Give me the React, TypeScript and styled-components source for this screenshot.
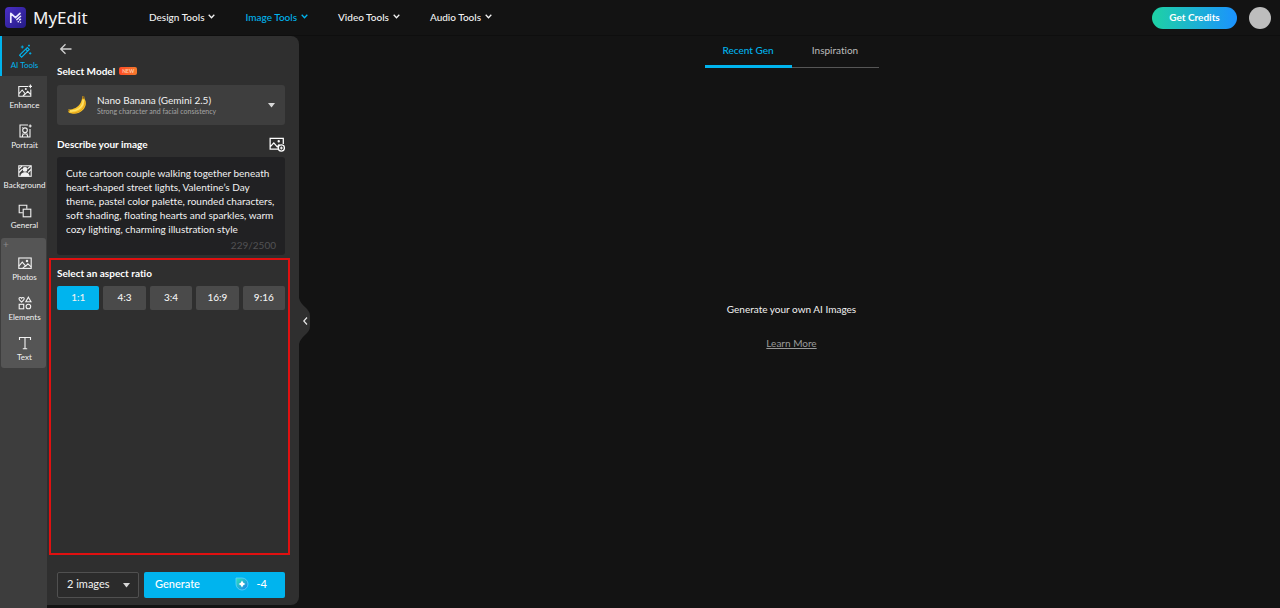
import React, { useState } from "react";
import styled, { createGlobalStyle, css } from "styled-components";

const accent = "#00b4ee";

const GlobalStyle = createGlobalStyle`
  *, *::before, *::after { box-sizing: border-box; }
  body {
    margin: 0;
    background: #131313;
    color: #f2f2f2;
    font-family: Lato, "Liberation Sans", sans-serif;
    font-size: 10px;
    line-height: 14px;
    font-variant-ligatures: none;
  }
  button, select, textarea, input { font: inherit; color: inherit; font-variant-ligatures: none; }
  svg { display: block; }
`;

const Page = styled.div`
  min-height: 100vh;
  display: flex;
  flex-direction: column;
`;

const Header = styled.header`
  height: 36px;
  flex: none;
  display: flex;
  align-items: center;
  padding: 0 9px 0 5px;
  border-bottom: 1px solid #0e0e0e;
`;

const Brand = styled.a`
  display: flex;
  align-items: center;
  gap: 7px;
  width: 144px;
  color: #f4f4f4;
  text-decoration: none;
  font: 400 17px/22px "Noto Sans", sans-serif;
`;

const Nav = styled.nav`
  display: flex;
  flex: 1;
  gap: 30px;
`;

const NavButton = styled.button<{ $active?: boolean }>`
  display: flex;
  align-items: center;
  gap: 4px;
  padding: 0 0 2px;
  border: 0;
  background: none;
  font-weight: 500;
  white-space: nowrap;
  color: ${(p) => (p.$active ? accent : "#f2f2f2")};
`;

const CreditsButton = styled.button`
  height: 22px;
  width: 85px;
  margin-right: 12px;
  padding: 0 0 2px;
  border: 0;
  border-radius: 11px;
  background: linear-gradient(90deg, #1ed2a4, #1b92ff);
  color: #fff;
  font-weight: 700;
`;

const Avatar = styled.button`
  width: 22px;
  height: 22px;
  padding: 0;
  border: 0;
  border-radius: 50%;
  background: #bdbdbd;
`;

const Body = styled.div`
  flex: 1;
  display: flex;
`;

const Rail = styled.nav`
  width: 47px;
  flex: none;
  background: #3d3d3d;
`;

const RailItem = styled.button<{ $active?: boolean }>`
  display: flex;
  flex-direction: column;
  align-items: center;
  gap: 2px;
  width: 100%;
  height: 40px;
  padding: 8px 0 0 2px;
  border: 0;
  background: none;
  font-size: 8px;
  line-height: 10px;
  ${(p) =>
    p.$active &&
    css`
      color: ${accent};
      background: #2f2f2f;
      box-shadow: inset 2px 0 0 ${accent};
    `}
`;

const RailGroup = styled.div`
  position: relative;
  margin: 2px 1px 0;
  padding-top: 10px;
  border-radius: 3px;
  background: #555;
`;

const GroupMark = styled.span`
  position: absolute;
  top: 1px;
  left: 2px;
  color: #8a8a8a;
  font-size: 10px;
  line-height: 10px;
`;

const Panel = styled.aside`
  position: relative;
  width: 252px;
  flex: none;
  display: flex;
  flex-direction: column;
  margin-bottom: 3px;
  padding: 6px 14px 7px 10px;
  border-radius: 0 8px 8px 0;
  background: #2f2f2f;
`;

const BackButton = styled.button`
  align-self: flex-start;
  padding: 0 1px;
  border: 0;
  background: none;
  color: #d0d0d0;
`;

const Heading = styled.div`
  display: flex;
  align-items: center;
  gap: 4px;
  height: 14px;
  font-weight: 700;
  color: #fff;
`;

const ModelHeading = styled(Heading)`
  margin: 8px 0 7px;
`;

const PromptHeading = styled(Heading)`
  justify-content: space-between;
  margin: 12px 0 6px;
`;

const Badge = styled.span`
  padding: 0 3px;
  border-radius: 2px;
  background: linear-gradient(90deg, #ff4a26, #f47a2c);
  color: #ffc9a8;
  font-size: 5px;
  line-height: 8px;
`;

const ModelSelect = styled.button`
  display: flex;
  align-items: center;
  gap: 10px;
  height: 40px;
  padding: 0 10px;
  border: 0;
  border-radius: 3px;
  background: #3e3e3e;
  text-align: left;
`;

const ModelText = styled.span`
  flex: 1;
  display: flex;
  flex-direction: column;
`;

const ModelName = styled.span`
  line-height: 12px;
`;

const ModelNote = styled.span`
  color: #a4a4a4;
  font-size: 7px;
  line-height: 10px;
`;

const IconButton = styled.button`
  padding: 0;
  border: 0;
  background: none;
`;

const PromptBox = styled.div`
  height: 98px;
  padding: 9px 9px 3px;
  border-radius: 3px;
  background: #212123;
`;

const Prompt = styled.textarea`
  display: block;
  width: 100%;
  height: 72px;
  padding: 0;
  border: 0;
  outline: 0;
  resize: none;
  overflow: hidden;
  background: none;
`;

const Counter = styled.div`
  text-align: right;
  color: #525254;
`;

const RatioSection = styled.fieldset`
  flex: 1;
  margin: 3px -5px 0 -8px;
  padding: 6px 3px 0 6px;
  border: 2px solid #e01010;
  min-width: 0;
`;

const RatioTitle = styled(Heading)`
  margin-bottom: 6px;
`;

const RatioRow = styled.div`
  display: grid;
  grid-template-columns: repeat(5, 1fr);
  gap: 4px;
`;

const Ratio = styled.label`
  display: flex;
  align-items: center;
  justify-content: center;
  height: 24px;
  padding-bottom: 2px;
  border-radius: 2px;
  background: #4a4a4a;
  font-weight: 500;
  cursor: pointer;
  &:has(input:checked) { background: ${accent}; }
  input {
    position: absolute;
    opacity: 0;
    pointer-events: none;
  }
`;

const Actions = styled.div`
  display: flex;
  gap: 5px;
  margin-top: 17px;
  font-size: 11px;
`;

const CountField = styled.div`
  display: grid;
  align-items: center;
  width: 82px;
  > * { grid-area: 1 / 1; }
  > svg {
    justify-self: end;
    margin-right: 9px;
    pointer-events: none;
  }
`;

const CountSelect = styled.select`
  appearance: none;
  height: 26px;
  padding: 0 9px 2px;
  border: 1px solid #505050;
  border-radius: 2px;
  background: #2b2b2b;
`;

const GenerateButton = styled.button`
  flex: 1;
  display: flex;
  align-items: center;
  height: 26px;
  padding: 0 18px 2px 11px;
  border: 0;
  border-radius: 2px;
  background: ${accent};
  color: #fff;
  font-weight: 500;
`;

const Cost = styled.span`
  display: flex;
  align-items: center;
  gap: 8px;
  margin-left: auto;
`;

const CollapseButton = styled.button`
  position: absolute;
  top: 262px;
  left: 100%;
  padding: 0;
  border: 0;
  background: none;
`;

const Results = styled.main`
  flex: 1;
  display: flex;
  flex-direction: column;
  align-items: center;
  padding-left: 4px;
`;

const Tabs = styled.div`
  display: flex;
  width: 174px;
`;

const Tab = styled.button<{ $active?: boolean }>`
  flex: 1;
  height: 32px;
  padding: 0 0 5px;
  border: 0;
  background: none;
  color: ${(p) => (p.$active ? accent : "#bcbcbc")};
  font-weight: ${(p) => (p.$active ? 500 : 400)};
  box-shadow: inset 0 ${(p) => (p.$active ? "-3px" : "-1px")} 0 ${(p) => (p.$active ? accent : "#565656")};
`;

const Empty = styled.div`
  flex: 1;
  display: flex;
  flex-direction: column;
  align-items: center;
  justify-content: center;
  gap: 20px;
  padding-bottom: 24px;
  p { margin: 0; }
  a { color: #9a9a9a; }
`;

const Icon = ({ size = 14, children }: { size?: number; children: React.ReactNode }) => (
  <svg width={size} height={size} viewBox="0 0 14 14" fill="none" stroke="currentColor" strokeWidth="1.1" aria-hidden="true">
    {children}
  </svg>
);

const Chevron = () => (
  <svg width="7" height="5" viewBox="0 0 7 5" fill="none" stroke="currentColor" strokeWidth="1.3" aria-hidden="true">
    <path d="M.7.8 3.5 3.7 6.3.8" />
  </svg>
);

const Caret = () => (
  <svg width="7" height="5" viewBox="0 0 7 5" fill="#d8d8d8" aria-hidden="true">
    <path d="M0 0h7L3.5 4.6z" />
  </svg>
);

const Logo = () => (
  <svg width="21" height="22" viewBox="0 0 21 22" aria-hidden="true">
    <defs>
      <linearGradient id="logo" x1="0" y1="0" x2="1" y2="1">
        <stop offset="0" stopColor="#4a2fc4" />
        <stop offset="1" stopColor="#241b86" />
      </linearGradient>
    </defs>
    <rect width="21" height="21" rx="4" fill="url(#logo)" />
    <g fill="none" stroke="#ece9ff" strokeWidth="1.7" strokeLinecap="round" strokeLinejoin="round">
      <path d="M5.800 15.200V6.300l4.700 4.300L15 6.300" />
      <path d="M11.800 12.600 15.600 9.200M15.500 12.200l-.8.700M13.200 14.700l.1-.1M15.500 15.200v.1" strokeWidth="1.500" />
    </g>
  </svg>
);

const Banana = () => (
  <svg width="20" height="20" viewBox="0 0 20 20" aria-hidden="true">
    <path d="M15.300 1.300 17 1l.6 3c2 3.200 1.700 7.200-1.200 10.400-3 3.700-8.500 4.900-12.800 3.900-2.500-.5-3.300-2.100-2.300-3.800 5 .2 9.500-2.200 12.100-6.300 1-1.600 1.300-3.200 1.600-4.700z" fill="#f8c52b" />
    <path d="M16 4.800c.8 3.400-.9 6.600-4 8.800-3 2-5.800 2.700-9.200 2.300" fill="none" stroke="#ffe36a" strokeWidth="1.500" />
    <path d="M17.900 6.500c.5 6-4.900 11.500-12.900 11.700" fill="none" stroke="#dc9716" strokeWidth=".8" />
    <path d="M15.300 1.300 17 1l.4 2.400-1.900.6z" fill="#86621d" />
    <path d="m1.500 14.800 1 .2-.4 1.900c-1-.5-1.300-1.300-.6-2.100z" fill="#704e16" />
  </svg>
);

const Coin = () => (
  <svg width="14" height="14" viewBox="0 0 14 14" aria-hidden="true">
    <defs>
      <linearGradient id="coin" x1="0" y1="0" x2="1" y2="1">
        <stop offset="0" stopColor="#31e2b6" />
        <stop offset="1" stopColor="#1680ee" />
      </linearGradient>
    </defs>
    <path d="M1 1h6a6 6 0 1 1-6 6z" fill="url(#coin)" stroke="#5fd0ff" strokeWidth=".8" />
    <path d="M7 3.600 8.300 5.700 10.400 7 8.300 8.300 7 10.400 5.700 8.300 3.600 7l2.100-1.300z" fill="#fff" />
  </svg>
);

const icons = {
  wand: (
    <>
      <path d="m1.600 11.200 7.700-7.700 2 2-7.700 7.700zM7.600 5.200l2 2" />
      <path d="M4.300 1.500v3M2.800 3h3M11 .6v2M10 1.600h2M12.200 8.200v2.400M11 9.400h2.400" strokeWidth=".9" />
    </>
  ),
  enhance: (
    <>
      <path d="M10 2.500H.8v9.700h12V5.500M.8 10l3.400-4 3.200 4 2.300-2.600 3.100 3.300M5 12l2.400-2.500" />
      <path d="M12.400.6v3.600M10.600 2.400h3.600" />
      <circle cx="7.800" cy="5" r=".5" />
    </>
  ),
  portrait: (
    <>
      <path d="M10 1H2v12h10V5M4.300 12.800c0-4 5.400-4 5.400 0M4 3.500h.6M4 9.600h.4M9.600 9.600h.4" />
      <circle cx="7" cy="6.200" r="2.300" />
      <path d="M12.200.5v3M10.700 2h3" />
    </>
  ),
  background: (
    <>
      <rect x=".8" y="1.800" width="12.400" height="10.500" />
      <path d="m1 5 3-3M1 8.500l3.500-3.500M9.500 5 12.800 2M10 8.500l3-3" />
      <circle cx="7" cy="5.400" r="1.800" fill="currentColor" />
      <path d="M3 12c.5-4.300 7.500-4.300 8 0z" fill="currentColor" />
    </>
  ),
  general: (
    <>
      <path d="M4.800 8.800H1.200V1.200h7.600v3.600" />
      <rect x="5.200" y="5.200" width="7.600" height="7.600" />
    </>
  ),
  photos: (
    <>
      <rect x=".8" y="2" width="12.400" height="10.400" />
      <path d="m.8 10.200 3.500-4 3.400 4 2.200-2.400 3.300 3M4.800 12.200l2.900-2.600" />
      <circle cx="9" cy="5" r=".7" />
    </>
  ),
  elements: (
    <>
      <path d="M3.600 6C2.200 4.800 1 4 1 2.800 1 1.300 3 1 3.600 2.300 4.200 1 6.200 1.300 6.200 2.800 6.200 4 5 4.800 3.600 6zM10.400 1.200 13 5.700H7.800z" />
      <rect x="1.200" y="8.300" width="4.500" height="4.500" />
      <circle cx="10.400" cy="10.500" r="2.300" />
    </>
  ),
  text: <path d="M1.500 4V1.500h11V4M7 1.500v11.300M4.800 12.800h4.400" />,
};

const tools: { id: keyof typeof icons; label: string }[] = [
  { id: "wand", label: "AI Tools" },
  { id: "enhance", label: "Enhance" },
  { id: "portrait", label: "Portrait" },
  { id: "background", label: "Background" },
  { id: "general", label: "General" },
];

const assets: { id: keyof typeof icons; label: string }[] = [
  { id: "photos", label: "Photos" },
  { id: "elements", label: "Elements" },
  { id: "text", label: "Text" },
];

const menus = ["Design Tools", "Image Tools", "Video Tools", "Audio Tools"];
const ratios = ["1:1", "4:3", "3:4", "16:9", "9:16"];

const initialPrompt =
  "Cute cartoon couple walking together beneath heart-shaped street lights, Valentine’s Day theme, pastel color palette, rounded characters, soft shading, floating hearts and sparkles, warm cozy lighting, charming illustration style";

export default function App() {
  const [prompt, setPrompt] = useState(initialPrompt);
  const [ratio, setRatio] = useState("1:1");
  const [tool, setTool] = useState("wand");

  return (
    <Page>
      <GlobalStyle />
      <Header>
        <Brand href="#">
          <Logo />
          MyEdit
        </Brand>
        <Nav>
          {menus.map((m) => (
            <NavButton key={m} $active={m === "Image Tools"}>
              {m}
              <Chevron />
            </NavButton>
          ))}
        </Nav>
        <CreditsButton>Get Credits</CreditsButton>
        <Avatar aria-label="Account" />
      </Header>
      <Body>
        <Rail>
          {tools.map((t) => (
            <RailItem key={t.id} $active={t.id === tool} onClick={() => setTool(t.id)}>
              <Icon>{icons[t.id]}</Icon>
              {t.label}
            </RailItem>
          ))}
          <RailGroup>
            <GroupMark aria-hidden="true">+</GroupMark>
            {assets.map((t) => (
              <RailItem key={t.id}>
                <Icon>{icons[t.id]}</Icon>
                {t.label}
              </RailItem>
            ))}
          </RailGroup>
        </Rail>
        <Panel>
          <BackButton aria-label="Back">
            <Icon>
              <path d="M13.500 7H3M7.500 2.200 2.700 7l4.800 4.800" strokeWidth="1.300" />
            </Icon>
          </BackButton>
          <ModelHeading>
            Select Model <Badge>NEW</Badge>
          </ModelHeading>
          <ModelSelect aria-haspopup="listbox">
            <Banana />
            <ModelText>
              <ModelName>Nano Banana (Gemini 2.5)</ModelName>
              <ModelNote>Strong character and facial consistency</ModelNote>
            </ModelText>
            <Caret />
          </ModelSelect>
          <PromptHeading>
            <label htmlFor="prompt">Describe your image</label>
            <IconButton aria-label="Add reference image">
              <Icon size={16}>
                <path d="M8 11.500H1V2h11.500v5M1 9.500 4.200 6l3 3.500L9 7.300" />
                <circle cx="8.500" cy="4.600" r=".5" />
                <circle cx="10.800" cy="10.500" r="2.700" />
                <path d="M10.800 9.200v2.600M9.500 10.500h2.600" strokeWidth=".9" />
              </Icon>
            </IconButton>
          </PromptHeading>
          <PromptBox>
            <Prompt id="prompt" spellCheck={false} value={prompt} onChange={(e) => setPrompt(e.target.value)} />
            <Counter>{prompt.length}/2500</Counter>
          </PromptBox>
          <RatioSection aria-labelledby="ratio-title">
            <RatioTitle id="ratio-title">Select an aspect ratio</RatioTitle>
            <RatioRow>
              {ratios.map((r) => (
                <Ratio key={r}>
                  <input type="radio" name="ratio" checked={r === ratio} onChange={() => setRatio(r)} />
                  {r}
                </Ratio>
              ))}
            </RatioRow>
          </RatioSection>
          <Actions>
            <CountField>
              <CountSelect aria-label="Number of images" defaultValue="2 images">
                <option>1 image</option>
                <option>2 images</option>
                <option>4 images</option>
              </CountSelect>
              <Caret />
            </CountField>
            <GenerateButton>
              Generate
              <Cost>
                <Coin />
                -4
              </Cost>
            </GenerateButton>
          </Actions>
          <CollapseButton aria-label="Collapse panel">
            <svg width="12" height="46" viewBox="0 0 12 46" aria-hidden="true">
              <path d="M0 0c1 4 3 6 6 9 3 3 5 5 5 9v10c0 4-2 6-5 9-3 3-5 5-6 9z" fill="#2f2f2f" />
              <path d="M8 19.500 4.800 23 8 26.500" fill="none" stroke="#e6e6e6" strokeWidth="1.200" />
            </svg>
          </CollapseButton>
        </Panel>
        <Results>
          <Tabs role="tablist">
            <Tab role="tab" aria-selected="true" $active>
              Recent Gen
            </Tab>
            <Tab role="tab" aria-selected="false">
              Inspiration
            </Tab>
          </Tabs>
          <Empty>
            <p>Generate your own AI Images</p>
            <a href="#">Learn More</a>
          </Empty>
        </Results>
      </Body>
    </Page>
  );
}
